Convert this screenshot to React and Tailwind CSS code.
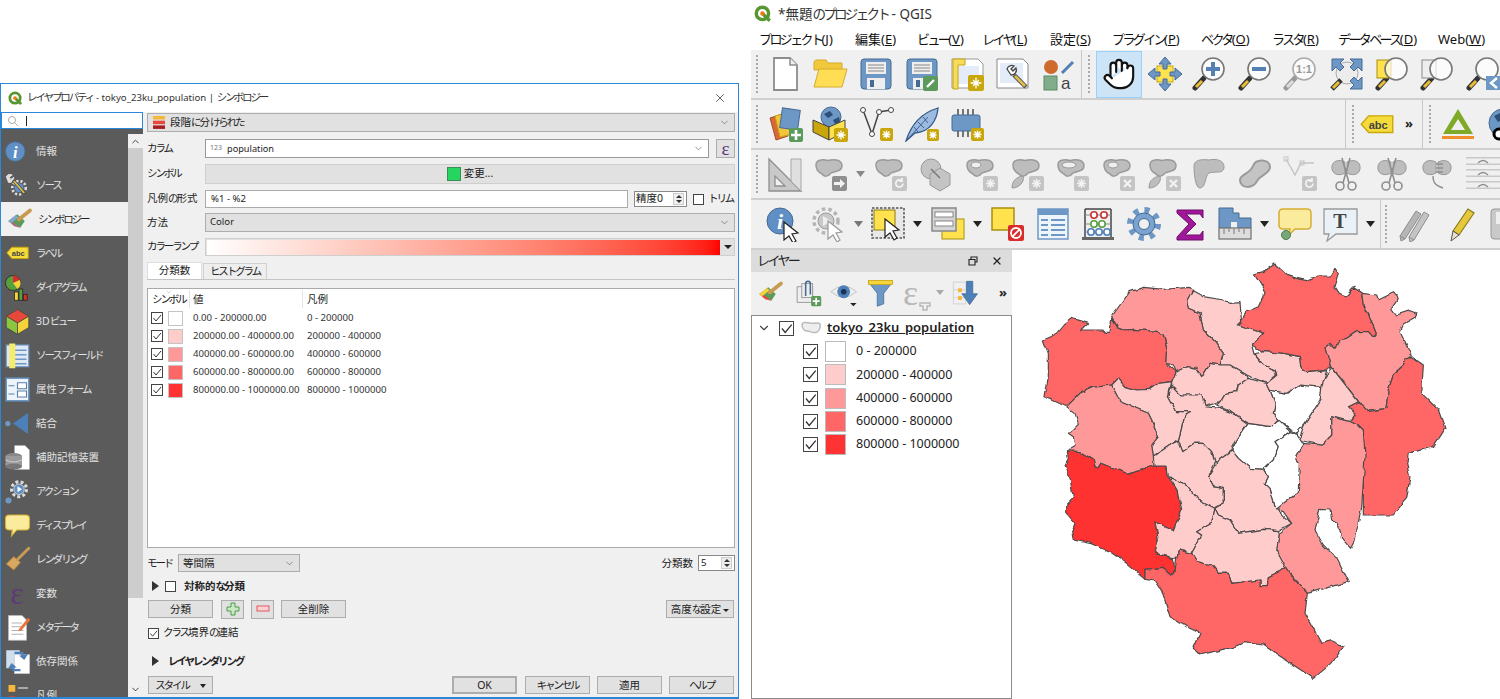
import React from "react";
import { Hand, ChevronDown, ChevronUp, X } from "lucide-react";

// kana in the reference UI font is much narrower than kanji
const J = ({ children }) =>
  children.split(/([\u3040-\u30ff]+)/).map((part, i) =>
    i % 2 ? (
      <span key={i} className="tracking-[-0.2em]">
        {part}
      </span>
    ) : (
      part
    )
  );

const S = ({ size = 36, children }) => (
  <svg width={size} height={size} viewBox="0 0 36 36" className="shrink-0">
    {children}
  </svg>
);

const Logo = ({ size = 16 }) => (
  <svg width={size} height={size} viewBox="0 0 16 16" className="shrink-0">
    <circle cx="7.5" cy="7.5" r="5.5" fill="#fff" stroke="#589632" strokeWidth="3" />
    <path d="M8 8l6 6" stroke="#589632" strokeWidth="3" />
    <circle cx="7.5" cy="7.5" r="2" fill="#ee7913" />
  </svg>
);

const Badge = ({ x = 21, y = 21, fill = "#c9a60a", s = 14 }) => {
  const c = s / 2;
  return (
    <g transform={`translate(${x} ${y})`}>
      <rect width={s} height={s} rx="2" fill={fill} />
      <path
        d={`M${c} 2.500V${s - 2.5}M2.500 ${c}H${s - 2.5}M${c - 3} ${c - 3}L${c + 3} ${c + 3}M${c + 3} ${c - 3}L${c - 3} ${c + 3}`}
        stroke="#fff"
        strokeWidth="1.300"
      />
    </g>
  );
};

const GreyBadge = ({ kind = "star", x = 20, y = 20 }) => (
  <g transform={`translate(${x} ${y})`}>
    <rect width="15" height="15" rx="2" fill={kind === "arrow" ? "#8f8f8f" : "#c4c4c4"} />
    {kind === "star" && <path d="M7.500 3v9M3 7.500h9M4.300 4.300l6.400 6.400M10.700 4.300l-6.400 6.400" stroke="#f2f2f2" strokeWidth="1.500" />}
    {kind === "x" && <path d="M4 4l7 7M11 4l-7 7" stroke="#f2f2f2" strokeWidth="2.400" />}
    {kind === "arrow" && <path d="M2 6h6V3l5 4.500-5 4.500V9H2z" fill="#f2f2f2" />}
    {kind === "rot" && <path d="M11 7.500a3.600 3.600 0 1 1-1.200-2.700M10 2v3H7" fill="none" stroke="#f2f2f2" strokeWidth="1.800" />}
  </g>
);

const blob = "M4 9C4 4 10 3 16 4.500C23 2.500 30 4 30 10C30 16 22 15 19 17C16 21 12 21 10 18C6 16 4 14 4 9Z";
const Blob = ({ children, d = blob }) => (
  <S>
    <path d={d} fill="#bdbdbd" stroke="#9a9a9a" strokeWidth="1.500" />
    {children}
  </S>
);

const NewFile = () => (
  <S>
    <path d="M7 2h16l7 7v25H7z" fill="#fff" stroke="#8d8d8d" strokeWidth="1.800" />
    <path d="M23 2v7h7" fill="#eee" stroke="#8d8d8d" strokeWidth="1.500" />
  </S>
);
const Folder = ({ size }) => (
  <S size={size}>
    <path d="M2 7c0-2 1-3 3-3h9l2 3h14v7H2z" fill="#f0c93c" stroke="#d5ab2b" />
    <path d="M2 31L7 13h28l-5 18z" fill="#ffdd55" stroke="#d5ab2b" />
  </S>
);
const Save = ({ edit }) => (
  <S>
    <rect x="3" y="3" width="30" height="30" rx="3" fill="#6d97c4" stroke="#456b94" />
    <rect x="8" y="6" width="20" height="12" fill="#eee" />
    <path d="M10 9h16M10 12h16M10 15h16" stroke="#888" strokeWidth="1.200" />
    <rect x="9" y="22" width="18" height="11" fill="#eee" />
    <rect x="12" y="24" width="4" height="7" fill="#456b94" />
    {edit && (
      <g>
        <rect x="19" y="20" width="15" height="15" rx="2" fill="#5a9a5a" />
        <path d="M23 31l7-7" stroke="#fff" strokeWidth="2.400" />
      </g>
    )}
  </S>
);
const NewLayout = () => (
  <S>
    <path d="M3 3h26l5 5v24H3z" fill="#fff" stroke="#999" />
    <rect x="6" y="10" width="24" height="18" fill="#e3ecf8" />
    <path d="M4 3h12v6H9v24H4z" fill="#f5dc5c" stroke="#c9a60a" />
    <Badge x={19} y={19} s={16} />
  </S>
);
const Manager = () => (
  <S>
    <path d="M2 3h26l5 5v24H2z" fill="#fff" stroke="#888" />
    <rect x="5" y="7" width="23" height="20" fill="#e3ecf8" />
    <path d="M12 13a5 5 0 0 1 7-3l-3 3 2 2 3-3a5 5 0 0 1-5 7z" fill="#fff" stroke="#444" strokeWidth="1.300" />
    <path d="M19 19l12 12" stroke="#555" strokeWidth="4.500" />
    <path d="M20 20l10 10" stroke="#e3c04c" strokeWidth="2.500" />
  </S>
);
const StyleMgr = () => (
  <S>
    <circle cx="11" cy="11" r="7" fill="#cf6a2e" />
    <path d="M22 17l11-11" stroke="#5580b4" strokeWidth="3" />
    <rect x="4" y="20" width="13" height="14" fill="#82ad8a" stroke="#5a8a62" />
    <text x="21" y="33" fontSize="17" fill="#444" fontFamily="Liberation Sans">a</text>
  </S>
);
const Arrows4 = () => (
  <S>
    <rect x="10" y="10" width="16" height="16" fill="#ffe24d" stroke="#c9a60a" />
    <path d="M18 1l6 7h-4v5h-4V8h-4zM18 35l-6-7h4v-5h4v5h4zM1 18l7-6v4h5v4H8v4zM35 18l-7 6v-4h-5v-4h5v-4z" fill="#6d97c4" stroke="#456b94" />
  </S>
);
const Mag = ({ children, top, pale }) => (
  <S>
    <path d="M12 22L3 32" stroke={pale ? "#999" : "#333"} strokeWidth="5" strokeLinecap="round" />
    <path d="M10 25L4 31" stroke={pale ? "#ddd" : "#e8bd37"} strokeWidth="3" />
    {children}
    <circle cx="21" cy="13" r="11" fill="#ffffffb0" stroke={pale ? "#aaa" : "#777"} strokeWidth="1.600" />
    {top}
  </S>
);
const ZoomFull = () => (
  <S>
    <circle cx="18" cy="17" r="11" fill="#ececec" stroke="#aaa" />
    <path d="M3 3h12l-4 4 4 4-4 4-4-4-4 4zM33 3H21l4 4-4 4 4 4 4-4 4 4zM33 33H21l4-4-4-4 4-4 4 4 4-4z" fill="#6d97c4" stroke="#456b94" />
    <path d="M12 24L3 33" stroke="#333" strokeWidth="5" />
    <path d="M10 26L4 32" stroke="#e8bd37" strokeWidth="3" />
  </S>
);
const DataSrc = () => (
  <S>
    <path d="M3 12l12-4 6 22-12 4z" fill="#d8683a" stroke="#a84f2b" />
    <path d="M8 10l12-3 5 21-12 3z" fill="#f2c53d" stroke="#c9a60a" />
    <rect x="14" y="3" width="18" height="20" fill="#6d97c4" stroke="#456b94" transform="rotate(8 23 13)" />
    <rect x="22" y="22" width="14" height="14" rx="2" fill="#5a9a5a" />
    <path d="M29 24v10M24 29h10" stroke="#fff" strokeWidth="2.600" />
  </S>
);
const GeoBox = () => (
  <S>
    <circle cx="19" cy="11" r="10" fill="#6d97c4" stroke="#456b94" />
    <path d="M12 8l6-3 3 4-5 3zM21 14l6-3 1 5-5 2z" fill="#2c4f78" />
    <path d="M1 14l16 7v13L1 26z" fill="#c9a60a" stroke="#444" />
    <path d="M17 21l16-7v12l-16 8z" fill="#ffe24d" stroke="#444" />
    <Badge x={22} y={22} s={14} />
  </S>
);
const NewVec = () => (
  <S>
    <path d="M5 4l9 24 7-22 12-2" fill="none" stroke="#444" strokeWidth="1.500" />
    <circle cx="5" cy="4" r="2.500" fill="#fff" stroke="#444" />
    <circle cx="14" cy="28" r="2.500" fill="#fff" stroke="#444" />
    <circle cx="21" cy="6" r="2.500" fill="#fff" stroke="#444" />
    <circle cx="33" cy="4" r="2.500" fill="#fff" stroke="#444" />
    <Badge x={22} y={22} s={13} />
  </S>
);
const Feather = ({ size }) => (
  <S size={size}>
    <path d="M2 35C6 22 14 8 34 2C33 14 26 26 11 27z" fill="#9dbbe0" stroke="#345a86" strokeWidth="1.300" />
    <path d="M2 35L24 11M10 21l4 5M14 16l6 6M19 11l5 6" stroke="#345a86" strokeWidth=".9" fill="none" />
    <Badge x={23} y={23} s={12} />
  </S>
);
const Chip = () => (
  <S>
    <path d="M9 3v6M14 3v6M19 3v6M24 3v6M9 25v6M14 25v6M19 25v6M24 25v6" stroke="#333" strokeWidth="1.300" />
    <rect x="3" y="9" width="28" height="16" rx="2" fill="#6d97c4" stroke="#456b94" />
    <Badge x={22} y={22} s={13} />
  </S>
);
const AbcLabel = ({ size = 36 }) => (
  <svg width={size} height={size * 0.6} viewBox="0 0 36 22" className="shrink-0">
    <path d="M1 11L9 2h26v18H9z" fill="#f5dc3c" stroke="#c9a60a" strokeWidth="1.500" />
    <text x="9" y="16" fontSize="12" fontWeight="700" fill="#444" fontFamily="Liberation Sans">abc</text>
  </svg>
);
const Triangle3 = () => (
  <S>
    <path d="M18 3L33 28H3zM18 13L11 24h14z" fill="#7eaa28" fillRule="evenodd" />
    <rect x="2" y="30" width="32" height="3" fill="#f28e2b" />
  </S>
);
const Globe = () => (
  <S>
    <circle cx="18" cy="17" r="14" fill="#6d97c4" stroke="#456b94" />
    <path d="M9 10l8-4 3 6-7 4zM20 18l8-4 1 8-6 4z" fill="#2c4f78" />
    <circle cx="14" cy="28" r="5" fill="#fff" stroke="#000" strokeWidth="3" />
    <path d="M16 25L30 14" stroke="#000" strokeWidth="5" />
  </S>
);
const Ruler = () => (
  <S>
    <path d="M2 3l32 32H2zM8 20v10h10z" fill="#c9c9c9" fillRule="evenodd" stroke="#8e8e8e" strokeWidth="1.300" />
    <path d="M24 3h10v32L24 25z" fill="#dfdfdf" stroke="#a8a8a8" />
  </S>
);
const Scissors = () => (
  <S>
    <path d="M17 6C8 2 3 7 4 13C5 19 12 20 17 17zM19 6C28 2 33 7 32 13C31 19 24 20 19 17z" fill="#bdbdbd" stroke="#9a9a9a" />
    <path d="M14 2l7 25M22 2l-7 25" stroke="#8e8e8e" strokeWidth="1.600" />
    <circle cx="12" cy="30" r="4" fill="none" stroke="#8e8e8e" strokeWidth="1.600" />
    <circle cx="24" cy="30" r="4" fill="none" stroke="#8e8e8e" strokeWidth="1.600" />
  </S>
);
const Offset = () => (
  <S>
    <path d="M1 5h34M1 17h34M1 29h34" stroke="#c9c9c9" strokeWidth="8" />
    <path d="M1 5h34M1 17h34M1 29h34" stroke="#f0f0f0" strokeWidth="5" />
    <path d="M13 7q5-5 10 0M13 19q5-5 10 0M13 31q5-5 10 0" fill="none" stroke="#8e8e8e" strokeWidth="1.400" />
  </S>
);
const Cursor = ({ x = 14, y = 14, s = 1, pale }) => (
  <path
    transform={`translate(${x} ${y}) scale(${s})`}
    d="M0 0l14 11-6 1 4 7-3 2-4-7-5 4z"
    fill="#fff"
    stroke={pale ? "#999" : "#222"}
    strokeWidth="1.200"
  />
);
const Info = ({ size, cursor }) => (
  <S size={size}>
    <circle cx="15" cy={cursor ? 15 : 18} r="13" fill="#5f8fc4" stroke="#456b94" />
    <text x="15" y={cursor ? 23 : 26} textAnchor="middle" fontSize="22" fontWeight="700" fontStyle="italic" fill="#fff" fontFamily="Liberation Serif">i</text>
    {cursor && <Cursor x={19} y={16} />}
  </S>
);
const Gear = ({ size }) => (
  <S size={size}>
    <circle cx="18" cy="18" r="14" fill="none" stroke="#6d97c4" strokeWidth="6" strokeDasharray="5 6" />
    <circle cx="18" cy="18" r="11" fill="#7ba3d0" stroke="#456b94" />
    <circle cx="18" cy="18" r="5.500" fill="#f0f0f0" stroke="#456b94" />
  </S>
);
const Action = ({ size, cursor }) => (
  <S size={size}>
    <circle cx="16" cy="15" r="12" fill="none" stroke="#b5b5b5" strokeWidth="3.500" strokeDasharray="3.500 3" />
    <circle cx="16" cy="15" r="8" fill="#c9c9c9" stroke="#999" />
    <path d="M13 10l8 5-8 5z" fill="#eee" />
    {cursor && <Cursor x={18} y={15} pale />}
  </S>
);
const Select = () => (
  <S>
    <rect x="2" y="2" width="32" height="30" fill="#e8e8e8" stroke="#555" strokeDasharray="2.500 1.500" strokeWidth="1.500" />
    <rect x="4" y="4" width="21" height="20" fill="#ffe24d" stroke="#8c7a10" />
    <Cursor x={15} y={13} />
  </S>
);
const FormSel = () => (
  <S>
    <rect x="12" y="13" width="22" height="20" fill="#ffe24d" stroke="#a89010" />
    <rect x="2" y="2" width="24" height="23" fill="#d5d5d5" stroke="#888" strokeWidth="1.500" />
    <rect x="5" y="6" width="18" height="5" fill="#fff" stroke="#888" />
    <rect x="5" y="15" width="18" height="5" fill="#fff" stroke="#888" />
  </S>
);
const Deselect = () => (
  <S>
    <rect x="3" y="2" width="22" height="22" fill="#ffe24d" stroke="#a89010" strokeWidth="1.500" />
    <rect x="19" y="19" width="16" height="16" rx="2" fill="#d92c2c" />
    <circle cx="27" cy="27" r="5" fill="none" stroke="#fff" strokeWidth="1.800" />
    <path d="M23 31l8-8" stroke="#fff" strokeWidth="1.800" />
  </S>
);
const Table = ({ size }) => (
  <S size={size}>
    <rect x="3" y="3" width="30" height="30" fill="#eef4fb" stroke="#6d97c4" strokeWidth="1.500" />
    <rect x="3" y="3" width="30" height="6" fill="#6d97c4" />
    <path d="M6 14h7M16 14h14M6 19h7M16 19h14M6 24h7M16 24h14M6 29h7M16 29h14" stroke="#6d97c4" strokeWidth="1.800" />
  </S>
);
const Abacus = () => (
  <S>
    <path d="M5 3v28M31 3v28M5 3h26" stroke="#444" strokeWidth="1.500" fill="none" />
    <rect x="2" y="31" width="32" height="3" fill="#666" />
    <path d="M5 9h26M5 18h26M5 26h26" stroke="#888" />
    {[[14, 9, "#c83232"], [24, 9, "#c83232"], [14, 18, "#57a040"], [22, 18, "#57a040"], [11, 26, "#4d7fb8"], [19, 26, "#4d7fb8"], [27, 26, "#4d7fb8"]].map(([x, y, c], i) => (
      <circle key={i} cx={x} cy={y} r="3.200" fill="#fff" stroke={c} strokeWidth="1.600" />
    ))}
  </S>
);
const Sigma = () => (
  <S>
    <path d="M5 4h26v8l-3-4H14l10 10-11 11h15l3-4v9H5v-3l12-13L5 7z" fill="#a01899" stroke="#6d0f68" />
  </S>
);
const Measure = () => (
  <S>
    <path d="M2 2h14v5h6v5h12v10H2z" fill="#6d97c4" stroke="#456b94" />
    <path d="M14 22v-6h6v6" fill="#f0f0f0" />
    <rect x="2" y="22" width="32" height="11" fill="#ddd" stroke="#777" strokeWidth="1.300" />
    <path d="M7 23v5M12 23v3M17 23v5M22 23v3M27 23v5" stroke="#777" />
  </S>
);
const Bubble = ({ size }) => (
  <S size={size}>
    <path d="M6 3h24q4 0 4 4v12q0 4-4 4H18l-6 6 1-6H6q-4 0-4-4V7q0-4 4-4z" fill="#fbeb9c" stroke="#d6ae33" strokeWidth="1.500" />
    <circle cx="9" cy="29" r="4.500" fill="#78a878" stroke="#4c7a4c" />
  </S>
);
const Speech = ({ size }) => (
  <S size={size}>
    <path d="M7 4h22q5 0 5 5v10q0 5-5 5H17l-7 8 1-8H7q-5 0-5-5V9q0-5 5-5z" fill="#fbeb9c" stroke="#d6ae33" strokeWidth="1.500" />
  </S>
);
const TextAnno = () => (
  <S>
    <path d="M2 3h33v25H14l-9 7 2-7H2z" fill="#eaf2f8" stroke="#999" strokeWidth="1.300" />
    <text x="18" y="22" textAnchor="middle" fontSize="20" fontWeight="700" fill="#444" fontFamily="Liberation Serif">T</text>
  </S>
);
const Pencil = ({ double }) => (
  <S>
    {double ? (
      <g>
        <path d="M3 30L19 5l5 3L8 33zM3 30l1 5 4-2" fill="#b5b5b5" stroke="#8e8e8e" />
        <path d="M12 31L27 6l5 3L17 34zM12 31l1 5 4-2" fill="#c4c4c4" stroke="#8e8e8e" />
      </g>
    ) : (
      <g>
        <path d="M10 25L25 3l6 4-15 22z" fill="#e6c93a" stroke="#8a7a20" strokeWidth="1.200" />
        <path d="M10 25l-2 10 8-6z" fill="#e8e0c8" stroke="#555" />
      </g>
    )}
  </S>
);
const SaveGrey = () => (
  <S>
    <rect x="3" y="3" width="30" height="30" rx="3" fill="#c9c9c9" stroke="#999" />
    <rect x="8" y="6" width="20" height="12" fill="#eee" />
  </S>
);
const Brush = ({ size = 26, colored }) => (
  <S size={size}>
    <path d="M3 20l12-9 10 9-6 9z" fill="#5a9a5a" />
    <path d="M3 20l8 7 8 2-9-7z" fill={colored ? "#e8483a" : "#b06a80"} />
    <path d="M3 20l10-8 4 3-10 8z" fill={colored ? "#f5d33a" : "#7fa7c9"} />
    <path d="M17 18L32 6" stroke="#c89a52" strokeWidth="5" strokeLinecap="round" />
  </S>
);
const Broom = ({ size = 26 }) => (
  <S size={size}>
    <path d="M3 24l10-10 9 8-9 10z" fill="#d9a860" stroke="#a87a3a" />
    <path d="M18 18L33 3" stroke="#c89a52" strokeWidth="4" strokeLinecap="round" />
  </S>
);
const Wrench = ({ size }) => (
  <S size={size}>
    <path d="M3 6a6 6 0 0 1 8-2l-4 3 2 3 4-3a6 6 0 0 1-7 7z" fill="#ddd" stroke="#eee" />
    <circle cx="20" cy="21" r="9" fill="none" stroke="#dcdcdc" strokeWidth="3.500" strokeDasharray="3 2.500" />
    <circle cx="20" cy="21" r="6" fill="#5f8fc4" />
    <path d="M12 11l16 18" stroke="#444" strokeWidth="4" />
    <path d="M13 12l14 16" stroke="#e3c04c" strokeWidth="2.500" />
  </S>
);
const Diagram = ({ size }) => (
  <S size={size}>
    <circle cx="12" cy="12" r="10" fill="#57a040" stroke="#222" />
    <path d="M12 12V2a10 10 0 0 1 9 6z" fill="#d92c2c" />
    <path d="M12 12L21 8a10 10 0 0 1-3 12z" fill="#f5d33a" />
    <rect x="14" y="24" width="5" height="11" fill="#f5d33a" stroke="#222" />
    <rect x="20" y="20" width="5" height="15" fill="#57a040" stroke="#222" />
    <rect x="26" y="27" width="5" height="8" fill="#d92c2c" stroke="#222" />
  </S>
);
const Cube = ({ size }) => (
  <S size={size}>
    <path d="M18 2l15 9-15 9-15-9z" fill="#e8483a" stroke="#444" />
    <path d="M3 11l15 9v15L3 26z" fill="#8cc63f" stroke="#444" />
    <path d="M33 11l-15 9v15l15-9z" fill="#f5d33a" stroke="#444" />
  </S>
);
const Fields = ({ size }) => (
  <S size={size}>
    <rect x="3" y="4" width="30" height="29" fill="#dfe9f5" stroke="#6d97c4" strokeWidth="1.500" />
    <path d="M14 11h16M14 17h16M14 23h16M14 29h16" stroke="#6d97c4" strokeWidth="1.800" />
    <rect x="7" y="2" width="8" height="33" fill="#f6ec6c" />
  </S>
);
const AttrForm = ({ size }) => (
  <S size={size}>
    <rect x="3" y="3" width="30" height="30" fill="#eef4fb" stroke="#6d97c4" strokeWidth="2" />
    <path d="M6 13h8M18 9h12v8H18zM6 24h8M18 20h12v8H18z" fill="#fff" stroke="#5a7fa8" strokeWidth="1.500" />
  </S>
);
const Join = ({ size }) => (
  <S size={size}>
    <circle cx="5" cy="18" r="3.500" fill="#6d97c4" />
    <path d="M32 4v28L12 18z" fill="#4d7fb8" />
  </S>
);
const Aux = ({ size }) => (
  <S size={size}>
    <path d="M14 2h14l6 6v26H14z" fill="#fff" />
    <ellipse cx="13" cy="16" rx="11" ry="4" fill="#888" />
    <rect x="2" y="16" width="22" height="14" fill="#9a9a9a" />
    <ellipse cx="13" cy="30" rx="11" ry="4" fill="#777" />
    <path d="M2 21q11 6 22 0" stroke="#ddd" fill="none" />
  </S>
);
const ActionIco = ({ size }) => (
  <S size={size}>
    <circle cx="20" cy="15" r="10" fill="none" stroke="#dcdcdc" strokeWidth="4" strokeDasharray="4 3" />
    <circle cx="20" cy="15" r="7" fill="#5f8fc4" stroke="#eee" />
    <path d="M18 11l6 4-6 4z" fill="#fff" />
    <circle cx="6" cy="30" r="4" fill="#6d97c4" />
  </S>
);
const Epsilon = ({ size = 30, color = "#5d3a78", className = "" }) => (
  <span className={`font-['Liberation_Serif',serif] leading-none ${className}`} style={{ color, fontSize: size }}>
    ε
  </span>
);
const Meta = ({ size }) => (
  <S size={size}>
    <path d="M6 2h18l6 6v27H6z" fill="#fff" stroke="#bbb" />
    <path d="M10 12h14M10 17h16M10 22h16M10 27h16" stroke="#999" />
    <path d="M20 20L32 5l3 3-12 14-4 1z" fill="#e9743a" />
  </S>
);
const Depend = ({ size }) => (
  <S size={size}>
    <rect x="3" y="3" width="18" height="24" fill="#cfdff0" />
    <rect x="14" y="9" width="20" height="25" fill="#fff" stroke="#ccc" />
    <path d="M14 5h12v4l6-1-5 8-7-6h3v-2H14zM22 31H11v-4l-6 1 5-8 7 6h-3v2h8z" fill="#4d7fb8" />
  </S>
);
const LegendIco = ({ size }) => (
  <S size={size}>
    <rect x="6" y="4" width="9" height="9" fill="#f5b83a" />
    <rect x="6" y="19" width="9" height="9" fill="#d9481f" />
    <path d="M19 8h13M19 23h13" stroke="#aaa" strokeWidth="2.500" />
  </S>
);

const Dd = ({ dark = "#333" }) => (
  <div className="w-[14px] h-[36px] flex items-center justify-center shrink-0">
    <svg width="9" height="6" viewBox="0 0 9 6"><path d="M0 0h9L4.500 6z" fill={dark} /></svg>
  </div>
);
const T = ({ children, active }) => (
  <div className={`w-[45.6px] h-[47px] flex items-center justify-center shrink-0 ${active ? "bg-[#cde4f7] border border-[#99d1ff]" : ""}`}>
    {children}
  </div>
);
const Grip = () => <div className="w-[3px] h-[38px] border-l-2 border-dotted border-[#a8a8a8] shrink-0" />;
const Sep = () => <div className="w-px h-[48px] bg-[#c8c8c8] shrink-0" />;
const Row = ({ children }) => (
  <div className="h-[50px] flex items-center border-b-2 border-[#cfcfcf] bg-[#f0f0f0] overflow-hidden shrink-0">{children}</div>
);

const sideItems = [
  ["情報", Info], ["ソース", Wrench], ["シンボロジー", Brush], ["ラベル", AbcLabel],
  ["ダイアグラム", Diagram], ["3Dビュー", Cube], ["ソースフィールド", Fields], ["属性フォーム", AttrForm],
  ["結合", Join], ["補助記憶装置", Aux], ["アクション", ActionIco], ["ディスプレイ", Speech],
  ["レンダリング", Broom], ["変数", null], ["メタデータ", Meta], ["依存関係", Depend], ["凡例", LegendIco],
];

const classes = [
  ["#ffffff", "0.00 - 200000.00", "0 - 200000"],
  ["#ffcccc", "200000.00 - 400000.00", "200000 - 400000"],
  ["#ff9999", "400000.00 - 600000.00", "400000 - 600000"],
  ["#ff6666", "600000.00 - 800000.00", "600000 - 800000"],
  ["#ff3333", "800000.00 - 1000000.00", "800000 - 1000000"],
];

const Check = ({ size = 11, on = true }) => (
  <span className="bg-white border border-[#444] flex items-center justify-center shrink-0" style={{ width: size, height: size }}>
    {on && (
      <svg width={size - 2} height={size - 2} viewBox="0 0 10 10">
        <path d="M1.500 5l2.500 3 5-6" fill="none" stroke="#333" strokeWidth="1" />
      </svg>
    )}
  </span>
);
const Chev = () => <ChevronDown size={11} strokeWidth={1.300} className="text-[#555] shrink-0" />;
const Combo = ({ children, className = "" }) => (
  <div className={`flex items-center justify-between bg-[#e1e1e1] border border-[#adadad] pl-[4px] pr-[4px] ${className}`}>
    {children}
    <Chev />
  </div>
);
// text in the CJK font sits a pixel high, icons do not
const Btn = ({ children, icon, className = "" }) => (
  <div className={`h-[18px] flex items-center justify-center bg-[#e1e1e1] border border-[#adadad] shrink-0 ${icon ? "" : "pt-[2px]"} ${className}`}>{children}</div>
);
const Spin = () => (
  <div className="w-[11px] h-[12px] ml-auto mr-[2px] flex flex-col items-center justify-center gap-[2px] bg-[#eee] border border-[#ccc] shrink-0">
    <span className="w-0 h-0 border-x-[3px] border-x-transparent border-b-[3px] border-b-[#333]" />
    <span className="w-0 h-0 border-x-[3px] border-x-transparent border-t-[3px] border-t-[#333]" />
  </div>
);
const Tri = () => <span className="w-0 h-0 border-y-[5px] border-y-transparent border-l-[7px] border-l-[#333] shrink-0" />;
const Label = ({ children }) => <span className="w-[58px] shrink-0"><J>{children}</J></span>;
const Lat = ({ children }) => <span className="text-[9.600px]">{children}</span>;

const Dialog = () => (
  <div className="w-[739px] h-[616px] mt-[83px] border border-[#2b88d8] border-b-2 bg-[#f0f0f0] text-[10.500px] text-[#222] whitespace-nowrap flex flex-col overflow-hidden shrink-0">
    <div className="h-[28px] bg-white flex items-center pl-[7px] pr-[11px] shrink-0">
      <Logo size={15} />
      <span className="ml-[4px] text-[#333]">
        <J>レイヤプロパティ</J> <Lat>- tokyo_23ku_population |</Lat> <J>シンボロジー</J>
      </span>
      <X size={14} strokeWidth={1.200} className="ml-auto text-[#222]" />
    </div>
    <div className="flex flex-1 min-h-0">
      <div className="w-[142px] flex flex-col shrink-0">
        <div className="h-[17px] bg-white border border-[#2b88d8] flex items-center pl-[5px] shrink-0">
          <svg width="12" height="12" viewBox="0 0 12 12"><circle cx="5" cy="5" r="3.500" fill="none" stroke="#aaa" /><path d="M7.500 7.500L11 11" stroke="#aaa" /></svg>
          <span className="ml-[7px] w-px h-[10px] bg-[#222]" />
        </div>
        <div className="flex flex-1 min-h-0 bg-[#5b5b5b]">
          <div className="w-[127px] pt-[5px] overflow-hidden">
            {sideItems.map(([name, Icon]) => {
              const selected = name === "シンボロジー";
              return (
                <div key={name} className={`h-[34px] flex items-center ${selected ? "bg-[#f0f0f0] text-[#222] pl-[6px]" : "text-[#e2e2e2] pl-[4px]"}`}>
                  <span className="w-[24px] flex justify-center items-center shrink-0">
                    {Icon ? <Icon size={Icon === AbcLabel ? 23 : 27} /> : <Epsilon size={32} />}
                  </span>
                  <span className="ml-[7px] mt-[2px]"><J>{name}</J></span>
                </div>
              );
            })}
          </div>
          <div className="w-[15px] mt-[5px] bg-[#f0f0f0] flex flex-col">
            <div className="h-[14px] flex items-center justify-center"><ChevronUp size={11} strokeWidth={2} className="text-[#333]" /></div>
            <div className="h-[450px] bg-[#cdcdcd]" />
            <div className="mt-auto h-[16px] flex items-center justify-center"><ChevronDown size={11} strokeWidth={2} className="text-[#333]" /></div>
          </div>
        </div>
      </div>

      <div className="w-[595px] pl-[4px] pr-[3px] flex flex-col shrink-0">
        <Combo className="mt-px h-[19px] shrink-0">
          <span className="flex items-center gap-[4px]">
            <svg width="14" height="13" viewBox="0 0 14 13"><rect x="1" y="0" width="12" height="3.500" fill="#f5b83a" /><rect x="1" y="4.700" width="12" height="3.500" fill="#e8483a" /><rect x="1" y="9.400" width="12" height="3.500" fill="#a81c1c" /></svg>
            <span className="mt-px"><J>段階に分けられた</J></span>
          </span>
        </Combo>
        <div className="mt-[7px] h-[19px] flex items-center shrink-0">
          <Label>カラム</Label>
          <div className="flex-1 h-full bg-white border border-[#999] flex items-center justify-between pl-[4px] pr-[4px]">
            <span className="flex items-center gap-[5px]"><span className="text-[7px] text-[#777]">123</span><span className="text-[9.200px]">population</span></span>
            <Chev />
          </div>
          <div className="ml-[7px] w-[19px] h-full bg-[#e1e1e1] border border-[#adadad] flex items-center justify-center"><Epsilon size={19} /></div>
        </div>
        <div className="mt-[6px] h-[20px] flex items-center shrink-0">
          <Label>シンボル</Label>
          <div className="flex-1 h-full bg-[#e1e1e1] border border-[#cfcfcf] flex items-center justify-center gap-[3px]">
            <span className="w-[14px] h-[14px] bg-[#25d560] border border-[#3a8f55]" />
            <span>変更...</span>
          </div>
        </div>
        <div className="mt-[6px] h-[18px] flex items-center shrink-0">
          <Label>凡例の形式</Label>
          <div className="w-[423px] h-full bg-white border border-[#aaa] flex items-center pl-[5px] shrink-0"><Lat>%1 - %2</Lat></div>
          <div className="ml-[6px] w-[53px] h-[16px] bg-white border border-[#888] flex items-center pl-[1px] shrink-0">精度0<Spin /></div>
          <span className="ml-[6px]"><Check size={11} on={false} /></span>
          <span className="ml-[4px]"><J>トリム</J></span>
        </div>
        <div className="mt-[5px] h-[19px] flex items-center shrink-0">
          <Label>方法</Label>
          <Combo className="flex-1 h-full"><Lat>Color</Lat></Combo>
        </div>
        <div className="mt-[6px] h-[18px] flex items-center shrink-0">
          <Label>カラーランプ</Label>
          <div className="flex-1 h-full bg-[#e1e1e1] border border-[#cfcfcf] flex items-center pl-px">
            <div className="w-[513px] h-[15px] bg-linear-to-r from-white to-[#ff0000]" />
            <div className="ml-[4px] w-0 h-0 border-x-[4px] border-x-transparent border-t-[4px] border-t-[#222]" />
          </div>
        </div>
        <div className="mt-[6px] h-[18px] flex items-end border-b border-[#c4c4c4] shrink-0">
          <div className="w-[55px] h-full bg-white border-x border-t border-[#ddd] flex items-center justify-center">分類数</div>
          <div className="ml-px w-[64px] h-[16px] bg-[#eee] border-x border-t border-[#d0d0d0] flex items-center justify-center"><span><J>ヒストグラム</J></span></div>
        </div>
        <div className="mt-[8px] h-[260px] bg-white border border-[#aaa] shrink-0">
          <div className="relative h-[20px] flex items-center">
            <span className="w-[42px] pl-[4px] pt-[2px] border-r border-[#e4e4e4]"><J>シンボル</J></span>
            <span className="w-[113px] pl-[3px] pt-[2px] border-r border-[#e4e4e4]">値</span>
            <span className="pl-[4px] pt-[2px]">凡例</span>
            <ChevronDown size={8} strokeWidth={1} className="absolute left-[17px] -top-[1px] text-[#888]" />
          </div>
          {classes.map(([color, value, legend]) => (
            <div key={value} className="h-[18px] flex items-center text-[9.600px] text-[#333]">
              <span className="ml-[3px]"><Check size={12} /></span>
              <span className="ml-[5px] w-[15px] h-[15px] border border-[#c4c4c4] shrink-0" style={{ backgroundColor: color }} />
              <span className="ml-[10px] w-[114px] shrink-0">{value}</span>
              <span>{legend}</span>
            </div>
          ))}
        </div>
        <div className="mt-[6px] h-[18px] flex items-center shrink-0">
          <span className="w-[31px] mt-[2px]"><J>モード</J></span>
          <Combo className="w-[122px] h-full"><span className="mt-px">等間隔</span></Combo>
          <span className="ml-auto mt-[2px]">分類数</span>
          <div className="ml-[5px] w-[37px] h-[16px] bg-white border border-[#888] flex items-center pl-[2px]"><Lat>5</Lat><Spin /></div>
        </div>
        <div className="mt-[5px] h-[18px] flex items-center pl-[5px] shrink-0">
          <Tri />
          <span className="ml-[6px]"><Check size={11} on={false} /></span>
          <span className="ml-[8px] mt-[2px] font-bold"><J>対称的な分類</J></span>
        </div>
        <div className="mt-[5px] h-[18px] flex items-center pl-px pr-px shrink-0">
          <Btn className="w-[65px]">分類</Btn>
          <Btn icon className="ml-[8px] w-[23px] h-[19px]">
            <svg width="14" height="14" viewBox="0 0 14 14"><path d="M5 1h4v4h4v4H9v4H5V9H1V5h4z" fill="#cbe8c4" stroke="#4e9a4e" /></svg>
          </Btn>
          <Btn icon className="ml-[7px] w-[23px] h-[19px]">
            <svg width="14" height="8" viewBox="0 0 14 8"><rect x="1" y="1" width="12" height="5" fill="#fbd2d2" stroke="#e0585f" /></svg>
          </Btn>
          <Btn className="ml-[7px] w-[65px]">全削除</Btn>
          <Btn className="ml-auto w-[68px] gap-[2px]"><span><J>高度な設定</J></span><span className="w-0 h-0 border-x-[3px] border-x-transparent border-t-[3px] border-t-[#222]" /></Btn>
        </div>
        <div className="mt-[6px] h-[18px] flex items-center pl-px shrink-0">
          <Check size={11} />
          <span className="ml-[4px]"><J>クラス境界の連結</J></span>
        </div>
        <div className="mt-[10px] h-[18px] flex items-center pl-[5px] shrink-0">
          <Tri />
          <span className="ml-[9px] mt-[2px] font-bold"><J>レイヤレンダリング</J></span>
        </div>
        <div className="mt-[6px] h-[18px] flex items-center pl-px pr-px shrink-0">
          <Btn className="w-[65px] gap-[11px]"><span><J>スタイル</J></span><span className="w-0 h-0 border-x-[3.500px] border-x-transparent border-t-[4px] border-t-[#222]" /></Btn>
          <Btn className="ml-auto w-[65px] border-2 border-[#2b88d8]">OK</Btn>
          <Btn className="ml-[8px] w-[65px]"><span><J>キャンセル</J></span></Btn>
          <Btn className="ml-[7px] w-[65px]">適用</Btn>
          <Btn className="ml-[7px] w-[65px]"><span><J>ヘルプ</J></span></Btn>
        </div>
      </div>
    </div>
  </div>
);

const regions = [
  ["#ff6666", "672,72 700,65 735,42 770,75 800,85 830,92 860,78 900,78 915,55 925,70 912,110 925,130 945,138 970,112 995,130 1000,165 1030,225 1040,250 1030,262 1015,245 980,245 950,265 930,270 915,295 900,280 888,290 905,350 880,362 835,368 812,350 808,320 760,310 700,305 665,285 700,250 625,225 650,185 685,170 705,125"],
  ["#ff9999", "995,130 1040,135 1045,150 1090,128 1105,145 1085,175 1100,195 1140,182 1160,190 1155,205 1120,225 1110,245 1145,320 1120,325 1125,345 1090,375 1075,420 1068,475 1015,485 990,460 905,350 888,290 900,280 915,295 930,270 950,265 980,245 1015,245 1030,262 1040,250 1030,225 1000,165"],
  ["#ff6666", "1120,325 1145,320 1180,345 1175,430 1225,480 1245,535 1210,590 1135,610 1130,640 1140,680 1130,745 1090,795 1000,795 1000,540 985,525 960,515 975,490 955,470 985,455 1015,485 1068,475 1075,420 1090,375 1125,345"],
  ["#ff9999", "905,500 960,515 985,525 1000,540 1005,620 995,770 975,870 962,895 935,865 925,820 905,810 900,780 870,778 855,840 880,885 920,925 955,995 832,1030 790,985 765,950 740,900 748,850 785,820 760,785 738,778 800,730 808,640 795,625 820,580 875,585 905,555"],
  ["#ffcccc", "905,352 985,455 955,470 975,490 960,515 905,500 905,555 875,585 805,570 825,520 870,450 875,400"],
  ["#ffffff", "720,420 770,430 810,405 875,412 870,450 825,520 800,550 780,540 745,510 730,490 735,460"],
  ["#ffffff", "655,520 725,530 745,512 780,545 735,575 745,590 730,630 700,658 660,655 625,625 605,600 620,570"],
  ["#ffffff", "735,575 780,545 800,550 820,580 795,625 808,640 805,725 738,778 720,715 705,700 715,680 700,658 730,630 745,590"],
  ["#ffcccc", "672,312 700,305 760,310 808,320 812,350 835,368 890,362 875,412 810,405 770,430 720,420 710,400 740,375 735,360 700,345"],
  ["#ffcccc", "488,122 520,140 580,150 600,160 630,158 635,215 625,225 700,250 665,285 672,312 700,345 735,360 740,375 710,400 650,375 600,345 570,345 580,310 555,275 520,240 510,190 475,175 470,155"],
  ["#ff9999", "300,125 340,112 400,118 480,112 488,122 470,155 475,175 510,190 520,240 555,275 580,310 570,345 540,340 515,380 500,355 470,350 438,365 430,345 410,340 412,300 400,255 385,245 310,238 285,240 265,235 245,200 270,165"],
  ["#ff6666", "40,270 75,255 100,225 125,205 175,220 155,240 215,240 225,250 240,250 245,205 265,235 285,240 310,238 385,245 400,255 412,300 410,340 438,365 425,395 385,400 360,418 320,420 285,410 265,385 245,405 190,412 150,430 110,470 45,440 55,380 55,310"],
  ["#ffcccc", "438,365 470,350 500,355 515,380 540,340 570,345 600,345 650,375 655,385 625,405 620,425 585,430 570,455 525,470 515,435 450,435 425,410 425,395"],
  ["#ffcccc", "655,385 710,400 720,420 735,460 730,490 745,510 725,530 655,520 610,490 560,465 570,455 585,430 620,425 625,405"],
  ["#ffcccc", "425,410 450,435 515,435 525,470 570,475 610,490 652,520 620,570 605,600 570,625 555,640 545,605 520,580 495,580 458,605 445,570 465,495 480,485 440,485 415,440"],
  ["#ffcccc", "245,405 265,385 285,410 320,420 360,418 385,400 425,395 415,440 440,485 480,485 465,495 445,570 370,618 365,585 385,560 365,510 355,490 270,455"],
  ["#ff9999", "110,470 150,430 190,412 245,405 270,455 355,490 365,510 385,560 365,585 370,618 380,625 372,648 290,670 215,640 205,655 195,650 190,630 150,605 112,603 135,590 130,560 115,550 145,520 135,490"],
  ["#ff3333", "112,603 150,605 190,630 195,650 205,655 215,640 290,670 372,648 408,648 412,680 445,725 455,780 430,840 375,815 385,870 375,910 430,925 435,965 420,980 400,952 345,958 345,985 290,940 240,905 180,880 130,870 125,845 135,820 110,790 110,765 130,745 120,685 105,645 115,625"],
  ["#ffcccc", "372,648 370,618 445,570 458,605 495,580 520,580 545,605 555,640 545,660 535,680 550,710 580,715 580,760 555,775 505,750 470,705 420,682 412,680 408,648"],
  ["#ffcccc", "420,682 470,705 505,750 555,775 545,820 500,845 515,855 485,910 450,900 440,925 375,910 385,870 375,815 430,840 455,780 445,725"],
  ["#ffcccc", "605,600 625,625 660,655 700,658 715,680 705,700 720,715 738,778 785,820 745,842 700,838 625,850 600,810 565,795 555,775 580,760 580,715 550,710 535,680 555,650 570,625"],
  ["#ffcccc", "555,775 565,795 600,810 625,850 700,838 745,842 748,850 740,900 770,955 715,980 712,1010 690,1010 690,990 605,1000 595,970 565,970 545,945 500,935 485,910 515,855 500,845 545,820"],
  ["#ff6666", "345,958 400,952 420,980 435,965 440,925 450,900 485,910 500,935 545,945 565,970 595,970 605,1000 690,990 690,1010 712,1010 715,980 770,955 790,985 832,1030 825,1090 875,1180 905,1172 942,1188 905,1240 850,1285 700,1185 640,1178 610,1192 550,1205 510,1215 490,1195 510,1150 470,1130 420,1100 395,1020 375,990 345,985"],
];

// the turbulence gives the shared ward borders their jagged look
const TokyoMap = () => (
  <svg width="430" height="449" viewBox="0 0 1290 1347" className="shrink-0">
    <defs>
      <filter id="rough" x="0" y="0" width="100%" height="100%" filterUnits="userSpaceOnUse" primitiveUnits="userSpaceOnUse">
        <feTurbulence type="fractalNoise" baseFrequency="0.035" numOctaves="2" seed="4" />
        <feDisplacementMap in="SourceGraphic" scale="14" xChannelSelector="R" yChannelSelector="G" />
      </filter>
    </defs>
    <g filter="url(#rough)">
      {regions.map(([fill, points], i) => (
        <polygon key={i} points={points} fill={fill} stroke="#4a4a4a" strokeWidth="3.500" strokeLinejoin="round" />
      ))}
    </g>
  </svg>
);

const menus = [
  ["プロジェクト(", "J", ")", 96],
  ["編集(", "E", ")", 62],
  ["ビュー(", "V", ")", 65],
  ["レイヤ(", "L", ")", 68],
  ["設定(", "S", ")", 62],
  ["プラグイン(", "P", ")", 89],
  ["ベクタ(", "O", ")", 71],
  ["ラスタ(", "R", ")", 66],
  ["データベース(", "D", ")", 100],
  ["Web(", "W", ")", 50],
];

const Qgis = () => (
  <div className="w-[749px] ml-[12px] h-[699px] flex flex-col overflow-hidden shrink-0 text-[#222]">
    <div className="h-[28px] flex items-center pl-[3px] shrink-0">
      <Logo size={18} />
      <span className="ml-[6px] text-[13.500px] text-[#333]"><J>*無題のプロジェクト</J> - QGIS</span>
    </div>
    <div className="h-[22px] flex items-center pl-[8px] pt-px text-[13px] text-[#111] shrink-0 whitespace-nowrap">
      {menus.map(([a, u, b, w]) => (
        <span key={u} className="shrink-0" style={{ width: w }}>
          <J>{a}</J><span className="underline">{u}</span>{b}
        </span>
      ))}
    </div>

    <Row>
      <div className="ml-[5px] mr-[3px] flex"><Grip /></div>
      <T><NewFile /></T><T><Folder /></T><T><Save /></T><T><Save edit /></T><T><NewLayout /></T><T><Manager /></T><T><StyleMgr /></T>
      <Sep /><div className="ml-[6px] mr-[5px] flex"><Grip /></div>
      <T active><Hand size={34} strokeWidth={1.500} className="text-[#111] fill-white" /></T>
      <T><Arrows4 /></T>
      <T><Mag top={<path d="M21 6v14M14 13h14" stroke="#5580b4" strokeWidth="4" />} /></T>
      <T><Mag top={<path d="M14 13h14" stroke="#5580b4" strokeWidth="4" />} /></T>
      <T><Mag pale top={<text x="21" y="17" textAnchor="middle" fontSize="11" fontWeight="700" fill="#999" fontFamily="Liberation Sans">1:1</text>} /></T>
      <T><ZoomFull /></T>
      <T><Mag><rect x="2" y="4" width="14" height="18" fill="#ffe24d" stroke="#a89010" /></Mag></T>
      <T><Mag><rect x="2" y="4" width="14" height="18" fill="#eee" stroke="#888" /></Mag></T>
      <T><Mag top={<g><rect x="20" y="20" width="16" height="14" fill="#6d97c4" /><path d="M31 22l-6 5 6 5" fill="none" stroke="#fff" strokeWidth="2.500" /></g>} /></T>
    </Row>
    <Row>
      <div className="ml-[5px] mr-[3px] flex"><Grip /></div>
      <T><DataSrc /></T><T><GeoBox /></T><T><NewVec /></T><T><Feather /></T><T><Chip /></T>
      <div className="w-[355px] shrink-0" />
      <Sep /><div className="ml-[6px] mr-[3px] flex"><Grip /></div>
      <div className="w-[38px] flex justify-center shrink-0"><AbcLabel size={34} /></div>
      <div className="w-[26px] text-center text-[13px] font-bold shrink-0">»</div>
      <Sep /><div className="ml-[6px] mr-[3px] flex"><Grip /></div>
      <T><Triangle3 /></T><T><Globe /></T>
    </Row>
    <Row>
      <div className="ml-[5px] mr-[3px] flex"><Grip /></div>
      <T><Ruler /></T>
      <T><Blob><GreyBadge kind="arrow" /></Blob></T>
      <Dd dark="#888" />
      <T><Blob><GreyBadge kind="rot" /></Blob></T>
      <T><S><circle cx="13" cy="13" r="10" fill="#c4c4c4" stroke="#9a9a9a" /><path d="M22 12l10 6v11l-10 6-10-6V18z" fill="#c4c4c4" stroke="#9a9a9a" /><path d="M13 13l9 9" stroke="#777" strokeWidth="1.400" /></S></T>
      <T><Blob><ellipse cx="13" cy="9" rx="5" ry="3" fill="#eee" stroke="#9a9a9a" /><GreyBadge /></Blob></T>
      <T><Blob><path d="M3 32c0-8 5-11 11-12 2 6-4 12-11 12z" fill="#bdbdbd" stroke="#9a9a9a" /><GreyBadge /></Blob></T>
      <T><Blob><ellipse cx="15" cy="9" rx="7" ry="3" fill="#eee" stroke="#9a9a9a" /><GreyBadge /></Blob></T>
      <T><Blob><ellipse cx="13" cy="9" rx="5" ry="3" fill="#eee" stroke="#9a9a9a" /><GreyBadge kind="x" /></Blob></T>
      <T><Blob><path d="M3 32c0-8 5-11 11-12 2 6-4 12-11 12z" fill="#bdbdbd" stroke="#9a9a9a" /><GreyBadge kind="x" /></Blob></T>
      <T><S><path d="M3 10C3 4 10 3 18 4C26 2 34 5 33 12C32 18 24 15 18 17C14 19 15 32 9 32C4 32 3 16 3 10Z" fill="#bdbdbd" stroke="#9a9a9a" /></S></T>
      <T><S><path d="M3 24C3 18 13 18 16 10C19 2 33 3 33 11C33 18 24 18 20 25C16 33 3 33 3 24Z" fill="#c4c4c4" stroke="#9a9a9a" strokeWidth="2" /></S></T>
      <T><S><path d="M4 3l9 16 6-12h13" fill="none" stroke="#c4c4c4" strokeWidth="1.500" /><rect x="2" y="1" width="4" height="4" fill="none" stroke="#c4c4c4" /><rect x="18" y="5" width="4" height="4" fill="none" stroke="#c4c4c4" /><GreyBadge kind="rot" /></S></T>
      <T><Scissors /></T><T><Scissors /></T>
      <T><S><path d="M17 6C8 2 3 7 4 13C5 19 12 20 17 17zM19 6C28 2 33 7 32 13C31 19 24 20 19 17z" fill="#bdbdbd" stroke="#9a9a9a" /><path d="M17 8h7M17 12h7M17 16h7M14 20c0 8 4 10 10 12" fill="none" stroke="#8e8e8e" strokeWidth="1.400" /></S></T>
      <T><Offset /></T>
    </Row>
    <Row>
      <div className="ml-[5px] mr-[1px] flex"><div className="w-[3px]" /></div>
      <T><Info cursor /></T>
      <T><Action cursor /></T>
      <Dd dark="#777" />
      <T><Select /></T>
      <Dd dark="#222" />
      <T><FormSel /></T>
      <Dd dark="#222" />
      <T><Deselect /></T>
      <T><Table /></T>
      <T><Abacus /></T>
      <T><Gear /></T>
      <T><Sigma /></T>
      <T><Measure /></T>
      <Dd dark="#222" />
      <T><Bubble /></T>
      <T><TextAnno /></T>
      <Dd dark="#222" />
      <div className="ml-[3px]"><Sep /></div><div className="ml-[4px] flex"><Grip /></div>
      <div className="ml-[4px]"><T><Pencil double /></T></div>
      <T><Pencil /></T>
      <T><SaveGrey /></T>
    </Row>

    <div className="flex flex-1 min-h-0">
      <div className="w-[261px] flex flex-col shrink-0 bg-[#f0f0f0]">
        <div className="h-[22px] bg-[#dcdcdc] flex items-center pl-[6px] text-[13px] shrink-0">
          <span><J>レイヤー</J></span>
          <svg className="ml-auto" width="10" height="10" viewBox="0 0 10 10"><path d="M3 3V1h6v5H7M1 3.500h6V9H1z" fill="none" stroke="#222" strokeWidth="1.100" /></svg>
          <X size={12} strokeWidth={2.500} className="ml-[13px] mr-[9px] text-[#222]" />
        </div>
        <div className="h-[41px] flex items-center pl-[6px] shrink-0">
          <div className="w-[27px] flex justify-center"><Brush size={27} colored /></div>
          <div className="ml-[9px] w-[30px] flex justify-center">
            <S size={28}><rect x="4" y="10" width="20" height="20" fill="#eee" stroke="#888" /><rect x="10" y="6" width="14" height="18" fill="#eee" stroke="#888" /><path d="M15 22V6a3 3 0 0 1 6 0v14" fill="none" stroke="#456b94" strokeWidth="2" /><rect x="22" y="22" width="13" height="13" rx="2" fill="#5a9a5a" /><path d="M28.500 24v9M24 28.500h9" stroke="#fff" strokeWidth="2.200" /></S>
          </div>
          <div className="ml-[6px] w-[30px] flex justify-center">
            <S size={29}><path d="M1 17Q17 3 33 17Q17 31 1 17z" fill="#eee" stroke="#bbb" /><circle cx="17" cy="17" r="8" fill="#4d7fb8" /><circle cx="17" cy="17" r="3.500" fill="#1b3350" /><path d="M25 31h8l-4 4z" fill="#222" /></S>
          </div>
          <div className="ml-[6px] w-[30px] flex justify-center">
            <S size={29}><path d="M3 5h30L22 19v13l-8 3V19z" fill="#6d97c4" stroke="#456b94" /><rect x="3" y="3" width="30" height="5" fill="#f5d33a" stroke="#c9a60a" /></S>
          </div>
          <div className="ml-[8px] w-[30px] flex items-center relative">
            <Epsilon size={36} color="#b8b8b8" />
            <svg className="absolute left-[16px] bottom-0" width="12" height="9" viewBox="0 0 12 9"><path d="M1 1h10v3H8v4H4V4H1z" fill="none" stroke="#b8b8b8" strokeWidth="1.500" /></svg>
          </div>
          <div className="w-[14px] flex items-center justify-center"><svg width="8" height="5" viewBox="0 0 8 5"><path d="M0 0h8L4 5z" fill="#aaa" /></svg></div>
          <div className="ml-[4px] w-[28px] flex justify-center">
            <S size={28}><path d="M3 4h16v28H3zM3 14h16M3 24h16" fill="none" stroke="#ccc" /><rect x="9" y="12" width="5" height="5" fill="#f5b83a" /><rect x="9" y="22" width="5" height="5" fill="#f5b83a" /><path d="M20 3h8v16h6L24 33 14 19h6z" fill="#4d7fb8" stroke="#456b94" /></S>
          </div>
          <span className="ml-[20px] text-[13px] font-bold">»</span>
        </div>
        <div className="flex-1 bg-white border border-[#8c8c8c] mt-[2px]">
          <div className="h-[24px] flex items-center pl-[5px]">
            <ChevronDown size={14} strokeWidth={2} className="text-[#444]" />
            <span className="ml-[8px]"><Check size={15} /></span>
            <svg className="ml-[7px]" width="20" height="14" viewBox="0 0 20 14"><path d="M1 4c0-3 4-3 8-2 5 1 8-1 10 1 1 3-1 7-3 8-5 2-6-1-10-1-3 0-5-3-5-6z" fill="#eee" stroke="#bbb" strokeWidth="1.500" /></svg>
            <span className="ml-[6px] text-[13px] font-semibold underline">tokyo_23ku_population</span>
          </div>
          {classes.map(([color, value, legend]) => (
            <div key={legend} className="h-[23.300px] flex items-center pl-[51px]">
              <Check size={15} />
              <span className="ml-[7px] w-[21px] h-[21px] border border-[#bbb] shrink-0" style={{ backgroundColor: color }} />
              <span className="ml-[10px] text-[12.500px] text-[#222]">{legend}</span>
            </div>
          ))}
        </div>
      </div>
      <div className="ml-[5px] flex-1 bg-white pl-[13px]">
        <TokyoMap />
      </div>
    </div>
  </div>
);

export default function App() {
  return (
    <div className="w-[1500px] h-[699px] bg-white flex overflow-hidden [font-family:'Noto_Sans','Noto_Sans_CJK_JP',sans-serif]">
      <Dialog />
      <Qgis />
    </div>
  );
}
